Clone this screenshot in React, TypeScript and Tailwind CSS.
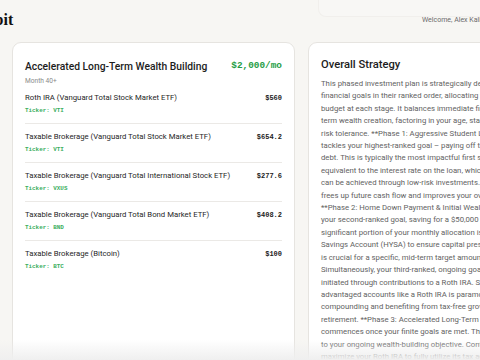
const holdings = [
  { name: "Roth IRA (Vanguard Total Stock Market ETF)", ticker: "VTI", amount: "$560" },
  { name: "Taxable Brokerage (Vanguard Total Stock Market ETF)", ticker: "VTI", amount: "$654.2" },
  { name: "Taxable Brokerage (Vanguard Total International Stock ETF)", ticker: "VXUS", amount: "$277.6" },
  { name: "Taxable Brokerage (Vanguard Total Bond Market ETF)", ticker: "BND", amount: "$408.2" },
  { name: "Taxable Brokerage (Bitcoin)", ticker: "BTC", amount: "$100" },
]

const strategyLines = [
  "This phased investment plan is strategically designed to address your",
  "financial goals in their ranked order, allocating your $2,000 monthly",
  "budget at each stage. It balances immediate financial needs with long-",
  "term wealth creation, factoring in your age, stable income, and moderate",
  "risk tolerance. **Phase 1: Aggressive Student Loan Payoff** directly",
  "tackles your highest-ranked goal – paying off the $25,000 student loan",
  "debt. This is typically the most impactful first step, offering a return",
  "equivalent to the interest rate on the loan, which often exceeds what",
  "can be achieved through low-risk investments. Eliminating this debt",
  "frees up future cash flow and improves your overall financial health.",
  "**Phase 2: Home Down Payment & Initial Wealth Building** focuses on",
  "your second-ranked goal, saving for a $50,000 home down payment. A",
  "significant portion of your monthly allocation is directed to a High-Yield",
  "Savings Account (HYSA) to ensure capital preservation and liquidity, which",
  "is crucial for a specific, mid-term target amount.",
  "Simultaneously, your third-ranked, ongoing goal of wealth building is",
  "initiated through contributions to a Roth IRA. Starting early with tax-",
  "advantaged accounts like a Roth IRA is paramount for maximizing",
  "compounding and benefiting from tax-free growth and withdrawals in",
  "retirement. **Phase 3: Accelerated Long-Term Wealth Building**",
  "commences once your finite goals are met. This phase shifts all funds",
  "to your ongoing wealth-building objective. Continuing to",
  "maximize your Roth IRA to fully utilize its tax advantages...",
]

const sans = "font-['Roboto','Liberation_Sans',sans-serif]"
const mono = "font-['Liberation_Mono','DejaVu_Sans_Mono',monospace]"

export default function App() {
  return (
    <div className={`relative w-[480px] h-[360px] overflow-hidden bg-[#f7f6f3] ${sans}`}>
      {/* faint panel peeking in at the top right */}
      <div className="absolute top-0 right-0 w-[162px] h-[17px] rounded-bl-[8px] bg-[#f8f7f5] border-l border-b border-[#f1efec]" />

      <header className="relative flex items-center h-[40px] w-[540px]">
        <div className="w-[422px] shrink-0 overflow-hidden">
          <span className="block -ml-[25px] font-['Liberation_Serif',serif] font-bold text-[16px] text-[#111] leading-none">
            Orbit
          </span>
        </div>
        <span className="whitespace-nowrap text-[7px] text-[#6b6b6b]">Welcome, Alex Kalinowski</span>
      </header>

      <main className="flex gap-[13px] pl-[12px] pt-[2px] w-[600px]">
        <section className="w-[283px] h-[340px] shrink-0 bg-white border border-[#e6e4e0] rounded-[9px] px-[12px] pt-[15px]">
          <div className="flex items-center justify-between">
            <h2 className="text-[10.3px] leading-[17px] font-medium text-[#1c1c1c]">
              Accelerated Long-Term Wealth Building
            </h2>
            <span className={`${mono} text-[9.4px] font-bold text-[#1f9d45]`}>$2,000/mo</span>
          </div>
          <div className="mt-[1px] text-[6.6px] leading-[10px] text-[#8a8a8a]">Month 40+</div>

          <div className="mt-[-1px]">
            {holdings.map((h, i) => (
              <div
                key={h.name}
                className={`flex justify-between py-[7px] ${i > 0 ? "border-t border-[#ebe9e6]" : ""}`}
              >
                <div>
                  <div className="text-[7.75px] leading-[12.4px] text-[#262626]">{h.name}</div>
                  <div className={`${mono} mt-[1.5px] text-[5.9px] leading-[10px] font-bold text-[#3aae5e]`}>
                    Ticker: {h.ticker}
                  </div>
                </div>
                <span className={`${mono} text-[7px] leading-[12.4px] font-bold text-[#1c1c1c]`}>{h.amount}</span>
              </div>
            ))}
          </div>
        </section>

        <section className="w-[260px] h-[340px] shrink-0 bg-white border border-[#e6e4e0] rounded-[9px] px-[12px] pt-[13px]">
          <h2 className="text-[11.2px] leading-[17px] font-medium text-[#1c1c1c]">Overall Strategy</h2>
          <p className="mt-[5px] whitespace-nowrap text-[7.75px] leading-[12.4px] text-[#626262]">
            {strategyLines.map((line, i) => (
              <span key={i} className="block">
                {line}
              </span>
            ))}
          </p>
        </section>
      </main>

      <div className="absolute inset-x-0 bottom-0 h-[20px] bg-gradient-to-b from-transparent to-[#efefef]" />
    </div>
  )
}
